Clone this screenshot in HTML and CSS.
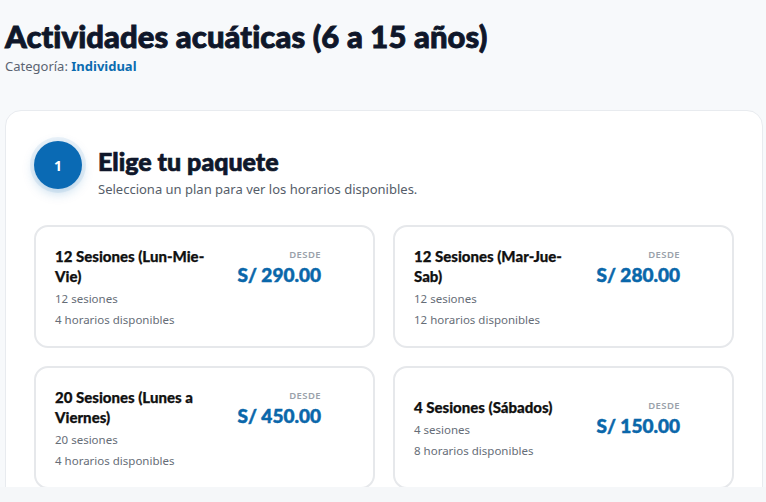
FILE: index.html
```html
<!DOCTYPE html>
<html lang="es">
<head>
  <meta charset="UTF-8" />
  <meta name="viewport" content="width=device-width, initial-scale=1" />
  <title>Actividades acuáticas</title>
  <link rel="stylesheet" href="styles.css">
</head>
<body>

  <main class="page">
    <div class="activity-head">
      <h1>Actividades acuáticas (6 a 15 años)</h1>
      <p class="category">Categoría: <strong>Individual</strong></p>
    </div>

    <section class="panel">
      <div class="step">
        <div class="step-num">1</div>
        <div class="step-text">
          <h2>Elige tu paquete</h2>
          <p>Selecciona un plan para ver los horarios disponibles.</p>
        </div>
      </div>

      <div class="packages">
        <div class="package">
          <div class="package-row">
            <div class="package-info">
              <h3>12 Sesiones (Lun-Mie-Vie)</h3>
              <p>12 sesiones</p>
              <p>4 horarios disponibles</p>
            </div>
            <div class="package-price">
              <span class="from">DESDE</span>
              <span class="amount">S/ 290.00</span>
            </div>
          </div>
        </div>

        <div class="package">
          <div class="package-row">
            <div class="package-info">
              <h3>12 Sesiones (Mar-Jue-Sab)</h3>
              <p>12 sesiones</p>
              <p>12 horarios disponibles</p>
            </div>
            <div class="package-price">
              <span class="from">DESDE</span>
              <span class="amount">S/ 280.00</span>
            </div>
          </div>
        </div>

        <div class="package">
          <div class="package-row">
            <div class="package-info">
              <h3>20 Sesiones (Lunes a Viernes)</h3>
              <p>20 sesiones</p>
              <p>4 horarios disponibles</p>
            </div>
            <div class="package-price">
              <span class="from">DESDE</span>
              <span class="amount">S/ 450.00</span>
            </div>
          </div>
        </div>

        <div class="package">
          <div class="package-row">
            <div class="package-info">
              <h3>4 Sesiones (Sábados)</h3>
              <p>4 sesiones</p>
              <p>8 horarios disponibles</p>
            </div>
            <div class="package-price">
              <span class="from">DESDE</span>
              <span class="amount">S/ 150.00</span>
            </div>
          </div>
        </div>
      </div>
    </section>
  </main>

  <div class="bottom-bar"></div>

</body>
</html>
```

FILE: styles.css
```css
body {
  margin: 0;
  padding: 0;
  font-family: 'Noto Sans', 'Open Sans', sans-serif;
  background: #f7f9fb;
  color: #0f172a;
  overflow: hidden;
}

.page {
  padding: 0 3px 0 5px;
}

/* === Cabecera de la actividad === */
.activity-head {
  padding-top: 17px;
  margin-bottom: 35px;
}

.activity-head h1 {
  margin: 0;
  font-family: Lato, 'DejaVu Sans', sans-serif;
  font-size: 31px;
  font-weight: 900;
  line-height: 39px;
  letter-spacing: 0.1px;
  color: #0f172a;
  -webkit-text-stroke: 0.9px #0f172a;
}

.category {
  margin: 1px 0 0;
  font-size: 13px;
  color: #5b6472;
}

.category strong {
  color: #0a6cb0;
  font-weight: 700;
}

/* === Panel principal === */
.panel {
  background: #fff;
  border: 1px solid #e8ebef;
  border-radius: 16px;
  padding: 29px 28px 30px;
}

.step {
  display: flex;
  align-items: flex-start;
  gap: 16px;
  margin-bottom: 27px;
}

.step-num {
  flex: none;
  width: 48px;
  height: 48px;
  margin-top: 1px;
  border-radius: 50%;
  background: #0a6ab4;
  color: #fff;
  font-size: 14px;
  font-weight: 700;
  display: flex;
  align-items: center;
  justify-content: center;
  box-shadow: 0 0 0 4px rgba(10, 106, 180, 0.08), 0 4px 12px rgba(10, 106, 180, 0.25);
}

.step-text h2 {
  margin: 6px 0 0;
  font-family: Lato, 'DejaVu Sans', sans-serif;
  font-size: 25px;
  font-weight: 900;
  line-height: 30px;
  color: #0f172a;
  -webkit-text-stroke: 0.7px #0f172a;
}

.step-text p {
  margin: 4px 0 0;
  font-size: 13px;
  color: #555d69;
}

/* === Paquetes === */
.packages {
  display: grid;
  grid-template-columns: 1fr 1fr;
  gap: 18px;
}

.package {
  border: 2px solid #e6e8eb;
  border-radius: 14px;
  padding: 19px 52px 16px 19px;
  display: flex;
  flex-direction: column;
  justify-content: center;
  min-height: 83px;
}

.package-row {
  display: flex;
  align-items: flex-start;
  gap: 22px;
}

.package-info {
  flex: 1;
}

.package-info h3 {
  margin: 0 0 2px;
  font-family: Lato, 'DejaVu Sans', sans-serif;
  font-size: 15px;
  font-weight: 900;
  line-height: 20px;
  color: #111;
  -webkit-text-stroke: 0.25px #111;
}

.package-info p {
  margin: 0;
  font-size: 11.5px;
  line-height: 21px;
  color: #666d77;
}

.package-price {
  display: flex;
  flex-direction: column;
  align-items: flex-end;
  padding-top: 2px;
}

.from {
  font-size: 9.5px;
  letter-spacing: 0.4px;
  color: #9aa1aa;
  font-weight: 600;
}

.amount {
  margin-top: 2px;
  font-family: Lato, 'DejaVu Sans', sans-serif;
  font-size: 19px;
  font-weight: 900;
  color: #0a67aa;
  white-space: nowrap;
  -webkit-text-stroke: 0.5px #0a67aa;
}

.bottom-bar {
  position: fixed;
  left: 0;
  right: 0;
  bottom: 0;
  height: 15px;
  background: #f5f7f9;
}
```
